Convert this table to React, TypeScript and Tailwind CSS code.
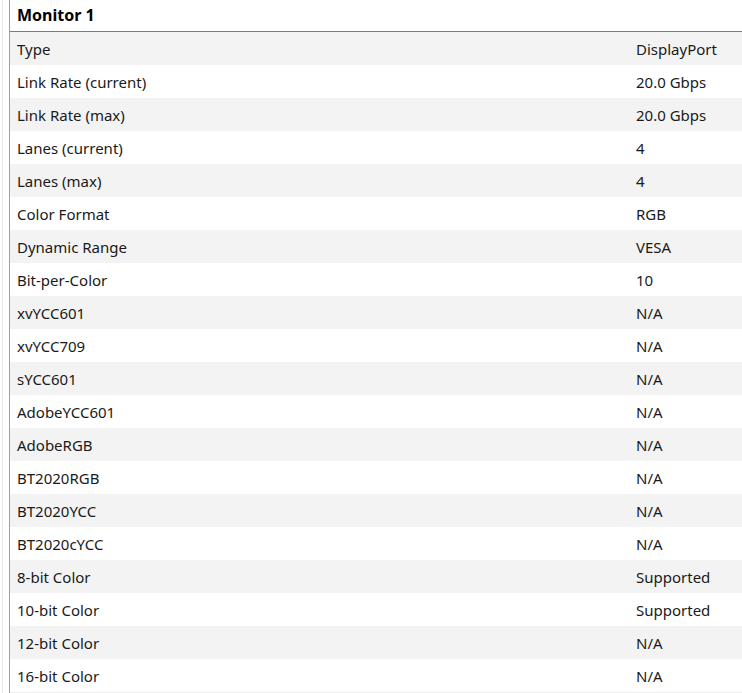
const rows: [string, string][] = [
  ["Type", "DisplayPort"],
  ["Link Rate (current)", "20.0 Gbps"],
  ["Link Rate (max)", "20.0 Gbps"],
  ["Lanes (current)", "4"],
  ["Lanes (max)", "4"],
  ["Color Format", "RGB"],
  ["Dynamic Range", "VESA"],
  ["Bit-per-Color", "10"],
  ["xvYCC601", "N/A"],
  ["xvYCC709", "N/A"],
  ["sYCC601", "N/A"],
  ["AdobeYCC601", "N/A"],
  ["AdobeRGB", "N/A"],
  ["BT2020RGB", "N/A"],
  ["BT2020YCC", "N/A"],
  ["BT2020cYCC", "N/A"],
  ["8-bit Color", "Supported"],
  ["10-bit Color", "Supported"],
  ["12-bit Color", "N/A"],
  ["16-bit Color", "N/A"],
];

export default function App() {
  return (
    <div className="flex h-[693px] w-[742px] overflow-hidden bg-white font-['Noto_Sans','Open_Sans',sans-serif] text-[#1a1a1a]">
      <div className="w-[2px] shrink-0" />
      <div className="w-px shrink-0 bg-[#e6e6e6]" />
      <div className="w-[6px] shrink-0" />
      <div className="w-px shrink-0 bg-[#a0a0a0]" />
      <div className="flex min-w-0 flex-1 flex-col">
        <div className="flex h-[32px] shrink-0 items-center border-b border-[#7c7c7c] pb-px pl-[7px] text-[16px] font-bold text-black">
          Monitor 1
        </div>
        {rows.map(([k, v], i) => (
          <div
            key={k}
            className={`flex h-[33px] shrink-0 items-center pt-px text-[15px] ${i % 2 === 0 ? "bg-[#f3f3f3]" : "bg-white"}`}
          >
            <span className="w-[626px] shrink-0 pl-[7px]">{k}</span>
            <span>{v}</span>
          </div>
        ))}
        <div className="h-px shrink-0 bg-[#ececec]" />
      </div>
    </div>
  );
}
